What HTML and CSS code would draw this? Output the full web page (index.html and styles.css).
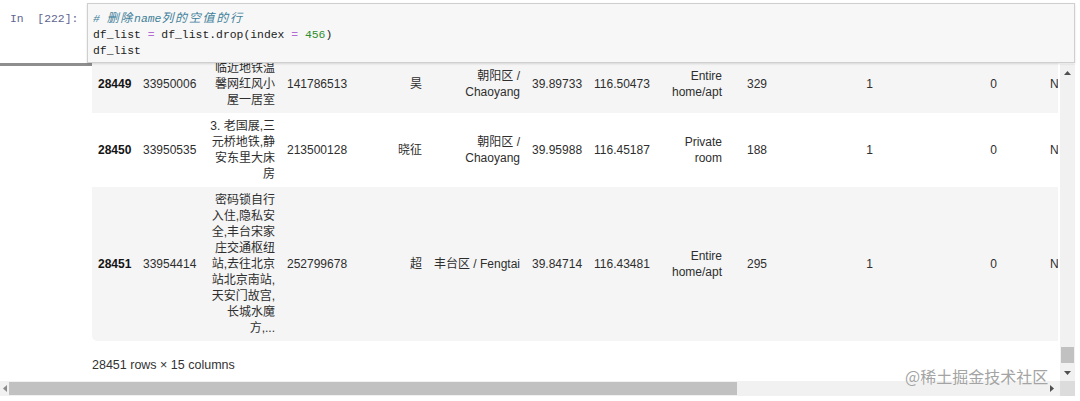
FILE: index.html
```html
<!DOCTYPE html>
<html lang="zh">
<head>
<meta charset="utf-8">
<title>df_list</title>
<link rel="stylesheet" href="styles.css">
</head>
<body>
<div class="page">
  <div class="main">
    <div class="content">
      <table class="df">
        <colgroup>
          <col class="c-idx"><col class="c-id"><col class="c-name"><col class="c-hid"><col class="c-hname"><col class="c-nb"><col class="c-lat"><col class="c-lon"><col class="c-room"><col class="c-price"><col class="c-min"><col class="c-rev"><col class="c-last"><col class="c-more"><col class="c-more">
        </colgroup>
        <tbody>
          <tr class="odd h3">
            <th>28449</th><td>33950006</td><td>临近地铁温馨网红风小屋一居室</td><td>141786513</td><td>昊</td><td class="nb">朝阳区 / Chaoyang</td><td>39.89733</td><td>116.50473</td><td>Entire home/apt</td><td>329</td><td>1</td><td>0</td><td>NaN</td><td>NaN</td><td>1</td>
          </tr>
          <tr>
            <th>28450</th><td>33950535</td><td>3. 老国展,三元桥地铁,静安东里大床房</td><td>213500128</td><td>晓征</td><td class="nb">朝阳区 / Chaoyang</td><td>39.95988</td><td>116.45187</td><td>Private room</td><td>188</td><td>1</td><td>0</td><td>NaN</td><td>NaN</td><td>1</td>
          </tr>
          <tr class="odd last">
            <th>28451</th><td>33954414</td><td>密码锁自行入住,隐私安全,丰台宋家庄交通枢纽站,去往北京站北京南站,天安门故宫,长城水魔方,...</td><td>252799678</td><td>超</td><td class="nb">丰台区 / Fengtai</td><td>39.84714</td><td>116.43481</td><td>Entire home/apt</td><td>295</td><td>1</td><td>0</td><td>NaN</td><td>NaN</td><td>1</td>
          </tr>
        </tbody>
      </table>
      <p class="shape">28451 rows × 15 columns</p>
    </div>
    <div class="vbar">
      <div class="vbtn"><svg width="7" height="4" viewBox="0 0 7 4"><polygon points="0,4 7,4 3.5,0" fill="#505050"/></svg></div>
      <div class="vtrack"><div class="vthumb"></div></div>
      <div class="vbtn"><svg width="7" height="4" viewBox="0 0 7 4"><polygon points="0,0 7,0 3.5,4" fill="#505050"/></svg></div>
    </div>
  </div>
  <div class="hbar">
    <div class="htrack">
      <div class="hbtn"><svg width="4" height="7" viewBox="0 0 4 7"><polygon points="4,0 4,7 0,3.5" fill="#8a8a8a"/></svg></div>
      <div class="hthumb"></div>
      <div class="hrest"></div>
      <div class="hbtn right"><svg width="4" height="7" viewBox="0 0 4 7"><polygon points="0,0 0,7 4,3.5" fill="#505050"/></svg></div>
    </div>
    <div class="corner"></div>
  </div>

  <div class="input">
    <div class="prompt">
      <div class="prompt-text">In&nbsp;&nbsp;[222]:</div>
      <div class="prompt-rule"></div>
    </div>
    <div class="code">
      <div class="line"><span class="cm"># <span class="cjk">删除</span>name<span class="cjk">列的空值的行</span></span></div>
      <div class="line">df_list <span class="op">=</span> df_list.drop(index <span class="op">=</span> <span class="num">456</span>)</div>
      <div class="line">df_list</div>
    </div>
  </div>

  <div class="watermark">@稀土掘金技术社区</div>
</div>
</body>
</html>
```

FILE: styles.css
```css
* { box-sizing: border-box; }

html, body {
  margin: 0;
  padding: 0;
  background: #fff;
}

.page {
  position: relative;
  width: 1080px;
  height: 401px;
  overflow: hidden;
  background: #fff;
  font-family: "Liberation Sans", "Noto Sans CJK SC", sans-serif;
  color: #2e2e2e;
}

/* ---------- output area ---------- */
.main {
  display: flex;
  height: 381px;
}

.content {
  width: 1058px;
  margin-right: 2px;
  overflow: hidden;
  padding: 55px 0 0 92px;
}

.df {
  border-collapse: collapse;
  border-spacing: 0;
  table-layout: fixed;
  width: 1148px;
  font-size: 12px;
  line-height: 16px;
}

.df th, .df td {
  padding: 5px 6px;
  text-align: right;
  vertical-align: middle;
  border: none;
}

.df td.nb { padding-left: 0; }

.df th { font-weight: bold; color: #141414; }

.df tr.odd { background: #f5f5f5; }
.df tr.last th { border-bottom-left-radius: 5px; }

.c-idx { width: 45px; }
.c-id { width: 64px; }
.c-name { width: 80px; }
.c-hid { width: 71px; }
.c-hname { width: 76px; }
.c-nb { width: 98px; }
.c-lat { width: 62px; }
.c-lon { width: 66px; }
.c-room { width: 74px; }
.c-price { width: 45px; }
.c-min { width: 106px; }
.c-rev { width: 124px; }
.c-last { width: 77px; }
.c-more { width: 80px; }

.shape {
  margin: 16px 0 0;
  font-size: 12.5px;
  line-height: 16px;
  color: #333;
}

/* ---------- vertical scrollbar ---------- */
.vbar {
  width: 15px;
  margin-top: 64px;
  display: flex;
  flex-direction: column;
  background: #f1f1f1;
}

.vbtn {
  height: 17px;
  display: flex;
  align-items: center;
  justify-content: center;
}

.vtrack {
  flex: 1;
  display: flex;
  flex-direction: column;
  justify-content: flex-end;
  padding: 0 1px 1px;
}

.vthumb {
  height: 16px;
  background: #c1c1c1;
}

/* ---------- horizontal scrollbar ---------- */
.hbar {
  display: flex;
  height: 15px;
}

.htrack {
  width: 1060px;
  display: flex;
  align-items: stretch;
  background: #f1f1f1;
}

.hbtn {
  width: 9px;
  display: flex;
  align-items: center;
  justify-content: center;
}

.hbtn.right { width: 16px; }

.hthumb {
  width: 728px;
  margin: 1px 0;
  background: #c1c1c1;
}

.hrest { flex: 1; }

.corner {
  width: 15px;
  background: #dcdcdc;
}

/* ---------- input cell (overlaid on the scrolled output) ---------- */
.input {
  position: absolute;
  top: 3px;
  left: 0;
  width: 1075px;
  display: flex;
  font-family: "Liberation Mono", "Noto Sans CJK SC", monospace;
  font-size: 11.4px;
  line-height: 16px;
}

.prompt {
  width: 87px;
  display: flex;
  flex-direction: column;
  background: #fff;
}

.prompt-text {
  padding: 8px 0 0 10px;
  color: #5f6690;
  white-space: nowrap;
}

.prompt-rule {
  margin-top: auto;
  margin-bottom: -3px;
  width: 92px;
  height: 3px;
  background: #8e8e8e;
}

.code {
  flex: 1;
  height: 60px;
  padding: 7px 0 3px 5px;
  background: #f7f7f7;
  border: 1px solid #cfcfcf;
  box-shadow: 0 1px 2px rgba(0, 0, 0, 0.12);
  color: #222;
  z-index: 1;
}

.line { white-space: pre; height: 16px; }

.cm { color: #3f7f9a; font-style: italic; }
.cjk { font-size: 12px; letter-spacing: 1.7px; }
.op { color: #b46cd2; }
.num { color: #2f8f2f; }

/* ---------- watermark ---------- */
.watermark {
  position: absolute;
  left: 905px;
  top: 365px;
  font-family: "Noto Sans CJK SC", sans-serif;
  font-size: 16px;
  line-height: 22px;
  color: #a4a4a4;
  text-shadow: 0 0 1px #fff;
  white-space: nowrap;
}
```
